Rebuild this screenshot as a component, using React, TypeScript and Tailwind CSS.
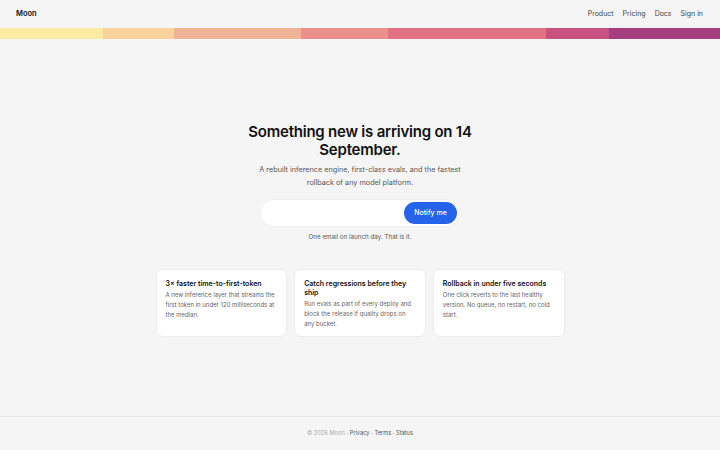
import React from 'react';

const segments = [
  'bg-[#fbeba3]',
  'bg-[#f9d39b]',
  'bg-[#f1b396]',
  'bg-[#ea8f89]',
  'bg-[#e07284]',
  'bg-[#c9517f]',
  'bg-[#a43e7f]',
];

const features = [
  {
    title: '3× faster time-to-first-token',
    body: 'A new inference layer that streams the first token in under 120 milliseconds at the median.',
  },
  {
    title: 'Catch regressions before they ship',
    body: 'Run evals as part of every deploy and block the release if quality drops on any bucket.',
  },
  {
    title: 'Rollback in under five seconds',
    body: 'One click reverts to the last healthy version. No queue, no restart, no cold start.',
  },
];

export default function App() {
  return (
    <div className="h-screen flex flex-col bg-[#f5f5f5] text-[#111] font-['Inter',sans-serif]">
      {/* Header */}
      <header className="h-[28px] flex items-center justify-between pl-4 pr-[17px]">
        <span className="text-[7.5px] font-semibold text-[#111]">Moon</span>
        <nav className="flex items-center gap-[9px] text-[7px] text-[#444]">
          <span>Product</span>
          <span>Pricing</span>
          <span>Docs</span>
          <span>Sign in</span>
        </nav>
      </header>

      {/* Launch bar */}
      <div className="h-[11px] grid grid-cols-[103fr_71fr_127fr_87fr_158fr_63fr_111fr]">
        {segments.map((c, i) => (
          <div key={i} className={c} />
        ))}
      </div>

      {/* Main */}
      <main className="flex-1 flex flex-col items-center justify-center pt-[5px]">
        <h1 className="max-w-[240px] text-center text-[15px] leading-[18px] font-semibold tracking-[-0.015em] text-[#111]">
          Something new is arriving on 14 September.
        </h1>
        <p className="mt-[4px] max-w-[215px] text-center text-[7.25px] leading-[13px] text-[#555]">
          A rebuilt inference engine, first-class evals, and the fastest rollback of any model platform.
        </p>

        <div className="mt-[11px] w-[198px] h-[26px] bg-white rounded-full flex items-center justify-end p-[2px] shadow-[0_0_0_1px_rgba(0,0,0,0.02)]">
          <button className="h-[22px] w-[53px] rounded-full bg-[#2563eb] text-white text-[7px] font-medium">
            Notify me
          </button>
        </div>
        <p className="mt-[7px] text-[6.25px] text-[#555]">One email on launch day. That is it.</p>

        <div className="mt-[27px] grid grid-cols-3 gap-[7px] w-[409px]">
          {features.map((f) => (
            <div
              key={f.title}
              className="h-[68px] bg-white rounded-[7px] border border-[#ececec] pl-[9px] pr-[10px] pt-[9px]"
            >
              <h3 className="text-[7px] leading-[9px] font-semibold text-[#111]">{f.title}</h3>
              <p className="mt-[2px] text-[6px] leading-[10px] text-[#666]">{f.body}</p>
            </div>
          ))}
        </div>
      </main>

      {/* Footer */}
      <footer className="h-[34px] border-t border-[#e8e8e8] flex items-center justify-center text-[5.7px]">
        <span className="text-[#aaa]">© 2026 Moon</span>
        <span className="text-[#555]">&nbsp;· Privacy · Terms · Status</span>
      </footer>
    </div>
  );
}
